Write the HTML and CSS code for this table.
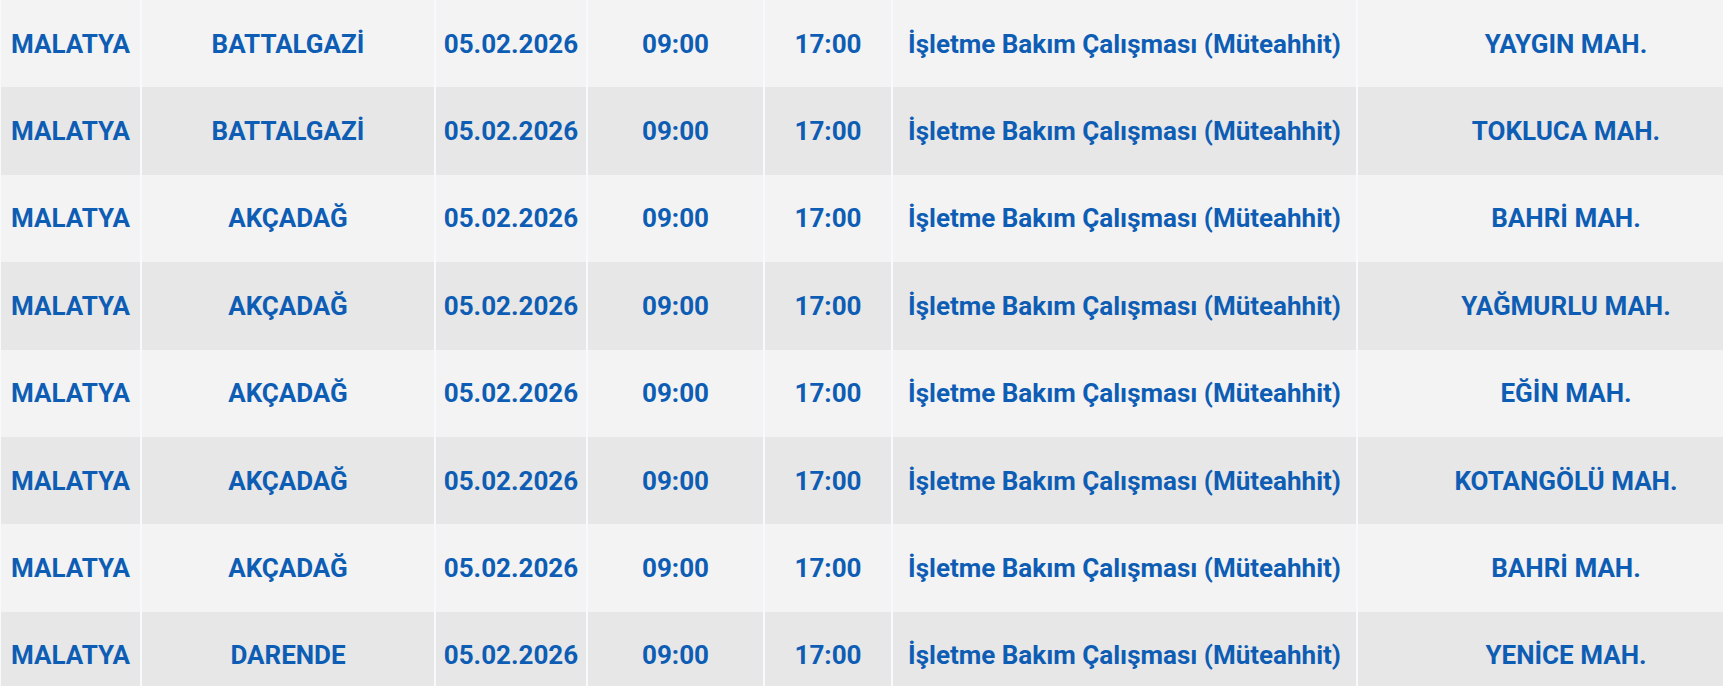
FILE: index.html
```html
<!DOCTYPE html>
<html lang="tr">
<head>
<meta charset="utf-8">
<link rel="stylesheet" href="styles.css">
</head>
<body>
<table class="outages">
  <colgroup>
    <col class="c-city"><col class="c-district"><col class="c-date"><col class="c-start"><col class="c-end"><col class="c-reason"><col class="c-area">
  </colgroup>
  <tbody>
    <tr><td>MALATYA</td><td>BATTALGAZİ</td><td>05.02.2026</td><td>09:00</td><td>17:00</td><td>İşletme Bakım Çalışması (Müteahhit)</td><td>YAYGIN MAH.</td></tr>
    <tr><td>MALATYA</td><td>BATTALGAZİ</td><td>05.02.2026</td><td>09:00</td><td>17:00</td><td>İşletme Bakım Çalışması (Müteahhit)</td><td>TOKLUCA MAH.</td></tr>
    <tr><td>MALATYA</td><td>AKÇADAĞ</td><td>05.02.2026</td><td>09:00</td><td>17:00</td><td>İşletme Bakım Çalışması (Müteahhit)</td><td>BAHRİ MAH.</td></tr>
    <tr><td>MALATYA</td><td>AKÇADAĞ</td><td>05.02.2026</td><td>09:00</td><td>17:00</td><td>İşletme Bakım Çalışması (Müteahhit)</td><td>YAĞMURLU MAH.</td></tr>
    <tr><td>MALATYA</td><td>AKÇADAĞ</td><td>05.02.2026</td><td>09:00</td><td>17:00</td><td>İşletme Bakım Çalışması (Müteahhit)</td><td>EĞİN MAH.</td></tr>
    <tr><td>MALATYA</td><td>AKÇADAĞ</td><td>05.02.2026</td><td>09:00</td><td>17:00</td><td>İşletme Bakım Çalışması (Müteahhit)</td><td>KOTANGÖLÜ MAH.</td></tr>
    <tr><td>MALATYA</td><td>AKÇADAĞ</td><td>05.02.2026</td><td>09:00</td><td>17:00</td><td>İşletme Bakım Çalışması (Müteahhit)</td><td>BAHRİ MAH.</td></tr>
    <tr><td>MALATYA</td><td>DARENDE</td><td>05.02.2026</td><td>09:00</td><td>17:00</td><td>İşletme Bakım Çalışması (Müteahhit)</td><td>YENİCE MAH.</td></tr>
  </tbody>
</table>
</body>
</html>
```
FILE: styles.css
```css
html, body {
  margin: 0;
  padding: 0;
  background: #f6fafd;
  overflow: hidden;
}
.outages {
  border-collapse: separate;
  border-spacing: 2px 0;
  table-layout: fixed;
  width: 1777px;
  margin-left: -1px;
  font-family: Roboto, "Liberation Sans", sans-serif;
  font-weight: 700;
  font-size: 26px;
  color: #0e5db4;
}
.c-city { width: 139px; }
.c-district { width: 292px; }
.c-date { width: 150px; }
.c-start { width: 175px; }
.c-end { width: 126px; }
.c-reason { width: 463px; }
.c-area { width: 416px; }
.outages td {
  height: 87.4px;
  padding: 0;
  text-align: center;
  vertical-align: middle;
  white-space: nowrap;
  background: #f3f3f3;
}
.outages tr:nth-child(even) td {
  background: #e7e7e7;
}
```
